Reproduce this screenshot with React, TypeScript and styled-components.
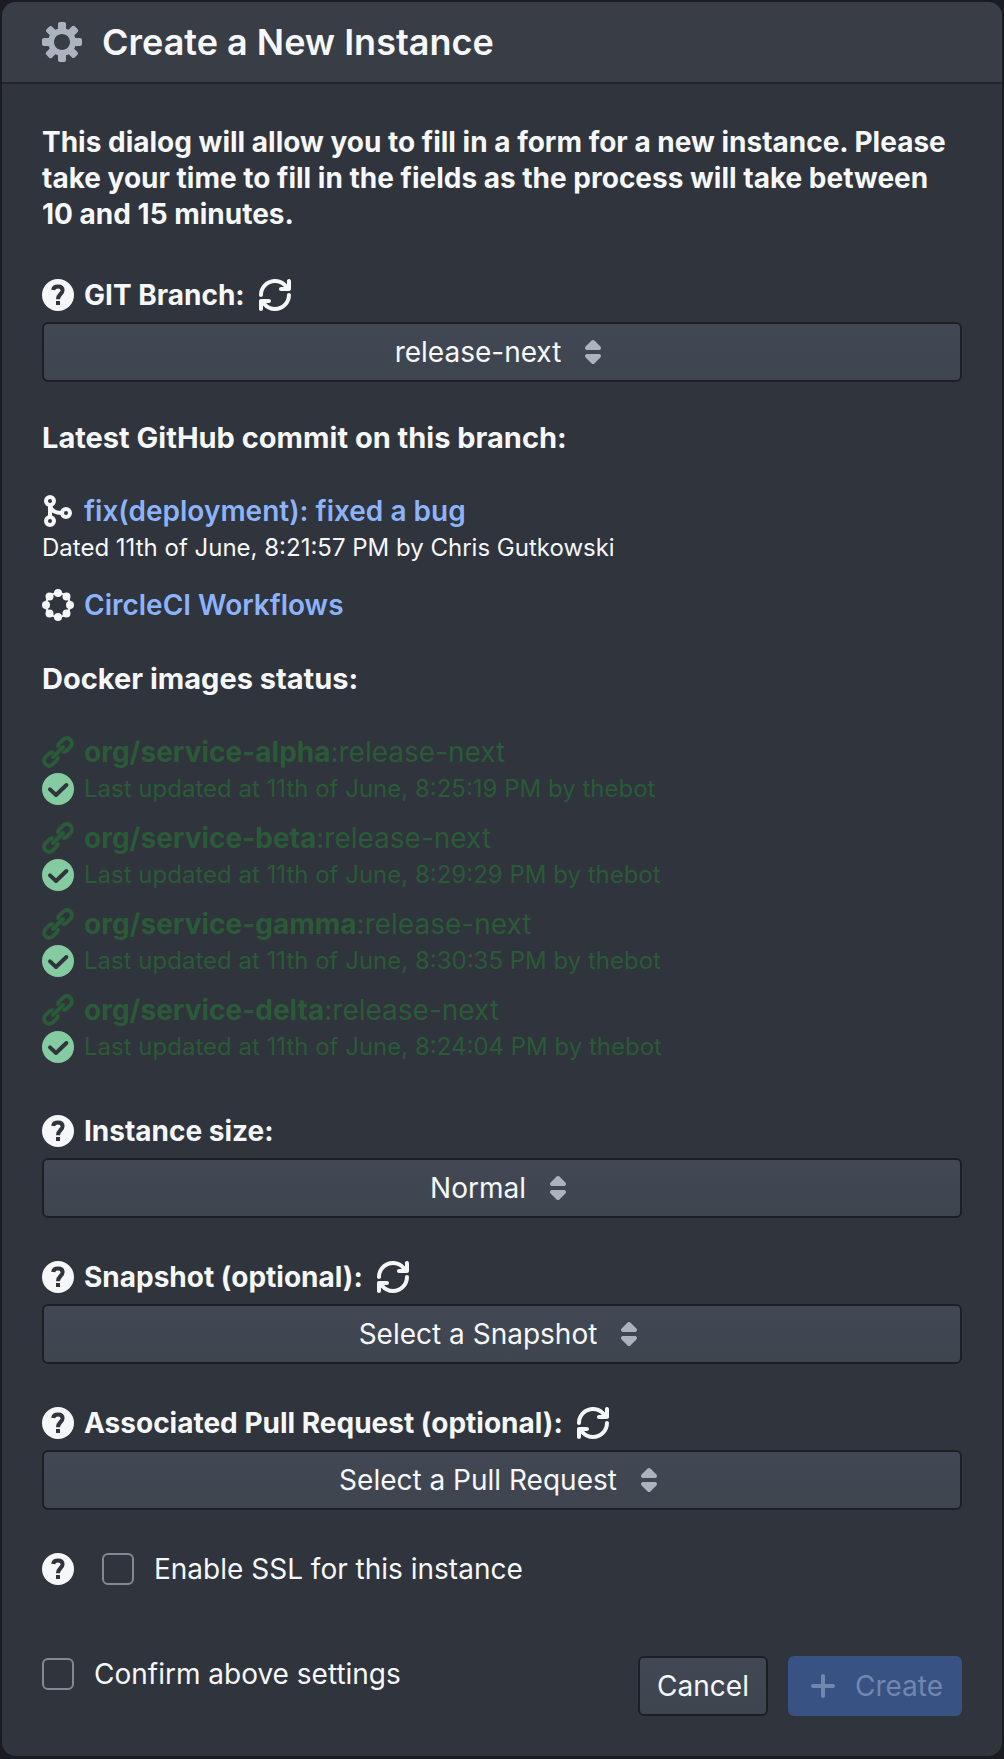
import React, { useId } from "react";
import styled, { createGlobalStyle, css } from "styled-components";

const color = {
  backdrop: "#1a1c22",
  dialog: "#30343c",
  header: "#393d46",
  line: "#22252b",
  text: "#f6f7f9",
  muted: "#abb3bf",
  link: "#8cb3fb",
  success: "#2a5a38",
  tick: "#85cba2",
  edge: "#1c1f24",
};

const GlobalStyle = createGlobalStyle`
  * { box-sizing: border-box; }
  body {
    margin: 0;
    background: ${color.backdrop};
    color: ${color.text};
    font-family: Inter, "Liberation Sans", sans-serif;
    font-size: 28px;
    line-height: 36px;
    -webkit-font-smoothing: antialiased;
  }
`;

const Backdrop = styled.div`
  min-height: 100vh;
  padding: 2px 2px 3px;
`;

const Dialog = styled.form`
  display: flex;
  flex-direction: column;
  background: ${color.dialog};
  border-radius: 14px;
  overflow: hidden;
`;

const Header = styled.header`
  display: flex;
  align-items: center;
  gap: 20px;
  min-height: 82px;
  padding: 0 40px;
  background: ${color.header};
  border-bottom: 2px solid ${color.line};
  color: ${color.muted};
`;

const Title = styled.h1`
  margin: 0;
  color: ${color.text};
  font-size: 36px;
  font-weight: 600;
  line-height: 40px;
`;

const Body = styled.div`
  display: flex;
  flex-direction: column;
  gap: 38px;
  padding: 40px;
`;

const Intro = styled.p`
  margin: 0;
  padding-bottom: 4px;
  font-weight: 700;
`;

const Field = styled.div`
  display: flex;
  flex-direction: column;
  gap: 9px;
  padding-top: 3px;
`;

const Row = styled.div<{ $strong?: boolean }>`
  display: flex;
  align-items: center;
  gap: 10px;
  min-height: 36px;
  ${(p) => p.$strong && css`font-weight: 700;`}
`;

const IconButton = styled.button`
  display: flex;
  margin: 0 0 0 4px;
  padding: 0;
  border: 0;
  background: none;
  color: inherit;
`;

const control = css`
  display: flex;
  align-items: center;
  justify-content: center;
  height: 60px;
  border: 2px solid ${color.edge};
  border-radius: 6px;
  background: linear-gradient(#424853, #3f454f);
  color: ${color.text};
`;

const SelectBox = styled.label`
  ${control}
  gap: 16px;
`;

const Select = styled.select`
  appearance: none;
  field-sizing: content;
  height: 56px;
  padding: 0;
  border: 0;
  outline: 0;
  background: transparent;
  color: inherit;
  font: inherit;
`;

const Section = styled.section`
  display: flex;
  flex-direction: column;
  gap: 37px;
`;

const Heading = styled.h2`
  margin: 0;
  font-size: 29px;
  font-weight: 700;
  line-height: 36px;
`;

const Entries = styled.div`
  display: flex;
  flex-direction: column;
  gap: 20px;
`;

const ImageList = styled.div`
  display: flex;
  flex-direction: column;
  gap: 12px;
  padding-bottom: 6px;
`;

const Link = styled.a`
  color: ${color.link};
  font-weight: 600;
  text-decoration: none;
`;

const Small = styled.div`
  font-size: 24px;
  line-height: 38px;
`;

const Image = styled.div`
  color: ${color.success};
`;

const ImageLink = styled.a`
  color: inherit;
  text-decoration: none;
`;

const CheckLabel = styled.label`
  display: flex;
  align-items: center;
  gap: 20px;
`;

const Checkbox = styled.input`
  appearance: none;
  width: 32px;
  height: 32px;
  margin: 0;
  border: 2px solid #838994;
  border-radius: 6px;
`;

const SslRow = styled.div`
  display: flex;
  align-items: center;
  gap: 28px;
  padding-top: 3px;
`;

const Footer = styled.footer`
  display: flex;
  align-items: flex-start;
  justify-content: space-between;
  padding: 29px 40px 40px;
`;

const Actions = styled.div`
  display: flex;
  gap: 20px;
`;

const Button = styled.button<{ $primary?: boolean }>`
  ${control}
  gap: 16px;
  padding: 0 17px;
  font: inherit;
  ${(p) =>
    p.$primary &&
    css`
      border-color: #385283;
      background: #385283;
      color: #7187ad;
    `}
`;

type IconProps = { size?: number; children: React.ReactNode };

const Svg = styled.svg`
  flex: none;
  display: block;
`;

const Icon = ({ size = 16, children }: IconProps) => (
  <Svg width={size * 2} height={size * 2} viewBox={`0 0 ${size} ${size}`} fill="currentColor" aria-hidden="true">
    {children}
  </Svg>
);

const CogIcon = () => (
  <Icon size={20}>
    <path d="M19 8h-2.31c-.14-.46-.33-.89-.56-1.3l1.7-1.7a.996.996 0 000-1.41l-1.41-1.41a.996.996 0 00-1.41 0l-1.7 1.7c-.41-.22-.84-.41-1.3-.55V1c0-.55-.45-1-1-1H9c-.55 0-1 .45-1 1v2.33c-.48.14-.94.35-1.37.59L5 2.28a.972.972 0 00-1.36 0L2.28 3.64c-.37.38-.37.99 0 1.36l1.64 1.63c-.24.43-.45.89-.59 1.37H1c-.55 0-1 .45-1 1v2c0 .55.45 1 1 1h2.31c.14.46.33.89.56 1.3L2.17 15a.996.996 0 000 1.41l1.41 1.41c.39.39 1.02.39 1.41 0l1.7-1.7c.41.22.84.41 1.3.55V19c0 .55.45 1 1 1h2c.55 0 1-.45 1-1v-2.33c.48-.14.94-.35 1.37-.59L15 17.72c.37.37.98.37 1.36 0l1.36-1.36c.37-.37.37-.98 0-1.36l-1.64-1.64c.24-.43.45-.89.59-1.36H19c.55 0 1-.45 1-1V9c0-.55-.45-1-1-1zm-9 6c-2.21 0-4-1.79-4-4s1.79-4 4-4 4 1.79 4 4-1.79 4-4 4z" />
  </Icon>
);

const HelpIcon = () => (
  <Icon>
    <circle cx="8" cy="8" r="8" />
    <path d="M5.6 5.5C5.7 4.4 6.7 3.8 8 3.8c1.4 0 2.3.7 2.3 1.8C10.3 7.5 8 7.6 8 10.1" fill="none" stroke={color.dialog} strokeWidth="2" />
    <path d="M7 11h2v2H7z" fill={color.dialog} />
  </Icon>
);

const RefreshIcon = () => (
  <Icon>
    <path d="M14.99 6.99c-.55 0-1 .45-1 1 0 3.31-2.69 6-6 6-1.77 0-3.36-.78-4.46-2h1.46c.55 0 1-.45 1-1s-.45-1-1-1h-4c-.55 0-1 .45-1 1v4c0 .55.45 1 1 1s1-.45 1-1v-1.74a7.95 7.95 0 006 2.74c4.42 0 8-3.58 8-8 0-.55-.45-1-1-1zm0-7c-.55 0-1 .45-1 1v1.74a7.95 7.95 0 00-6-2.74c-4.42 0-8 3.58-8 8 0 .55.45 1 1 1s1-.45 1-1c0-3.31 2.69-6 6-6 1.77 0 3.36.78 4.46 2h-1.46c-.55 0-1 .45-1 1s.45 1 1 1h4c.55 0 1-.45 1-1v-4c0-.55-.45-1-1-1z" />
  </Icon>
);

const CaretIcon = () => (
  <Icon>
    <path d="M5 7h6a1.003 1.003 0 00.71-1.71l-3-3C8.53 2.11 8.28 2 8 2s-.53.11-.71.29l-3 3A1.003 1.003 0 005 7zm6 2H5a1.003 1.003 0 00-.71 1.71l3 3c.18.18.43.29.71.29s.53-.11.71-.29l3-3A1.003 1.003 0 0011 9z" fill={color.muted} />
  </Icon>
);

const MergeIcon = () => (
  <Icon>
    <g fill="none" stroke="currentColor" strokeWidth="2">
      <circle cx="4" cy="3" r="2" />
      <circle cx="4" cy="13" r="2" />
      <circle cx="12" cy="9" r="2" />
      <path d="M4 5v6M4 5.500c.5 2.200 2.500 3.500 6 3.500" />
    </g>
  </Icon>
);

const WorkflowIcon = () => (
  <Icon>
    <circle cx="8" cy="8" r="6" fill="none" stroke="currentColor" />
    {Array.from({ length: 8 }, (_, i) => (
      <circle key={i} cx={8 + 6 * Math.cos((i * Math.PI) / 4)} cy={8 + 6 * Math.sin((i * Math.PI) / 4)} r="2" />
    ))}
  </Icon>
);

const CHAIN_LOOP = "M8.300 5.800C7.900 4.900 8.200 4.200 8.700 3.700L10.700 1.700A2.550 2.550 0 0 1 14.300 5.300L12.300 7.300C11.700 7.900 11 8.100 10.200 7.700";

const ChainIcon = () => (
  <Icon>
    <g fill="none" stroke="currentColor" strokeWidth="2">
      <path d="M5.500 10.500l5-5" strokeLinecap="round" />
      <path d={CHAIN_LOOP} />
      <path d={CHAIN_LOOP} transform="rotate(180 8 8)" />
    </g>
  </Icon>
);

const TickIcon = () => (
  <Icon>
    <circle cx="8" cy="8" r="8" fill={color.tick} />
    <path d="M4 8.200l3 2.800 5.200-5" fill="none" stroke={color.dialog} strokeWidth="2" strokeLinecap="round" strokeLinejoin="round" />
  </Icon>
);

const PlusIcon = () => (
  <Icon>
    <path d="M8 3v10M3 8h10" stroke="currentColor" strokeWidth="2" strokeLinecap="round" />
  </Icon>
);

type SelectFieldProps = { label: string; value: string; refreshable?: boolean };

const SelectField = ({ label, value, refreshable }: SelectFieldProps) => {
  const id = useId();
  return (
    <Field>
      <Row $strong>
        <HelpIcon />
        <label htmlFor={id}>{label}</label>
        {refreshable && (
          <IconButton type="button">
            <RefreshIcon />
          </IconButton>
        )}
      </Row>
      <SelectBox htmlFor={id}>
        <Select id={id} defaultValue={value}>
          <option>{value}</option>
        </Select>
        <CaretIcon />
      </SelectBox>
    </Field>
  );
};

const images = [
  { name: "org/service-alpha", time: "8:25:19 PM" },
  { name: "org/service-beta", time: "8:29:29 PM" },
  { name: "org/service-gamma", time: "8:30:35 PM" },
  { name: "org/service-delta", time: "8:24:04 PM" },
];

export default function App() {
  return (
    <>
      <GlobalStyle />
      <Backdrop>
        <Dialog>
          <Header>
            <CogIcon />
            <Title>Create a New Instance</Title>
          </Header>
          <Body>
            <Intro>
              This dialog will allow you to fill in a form for a new instance. Please take your time to fill in the
              fields as the process will take between 10 and 15 minutes.
            </Intro>
            <SelectField label="GIT Branch:" value="release-next" refreshable />
            <Section>
              <Heading>Latest GitHub commit on this branch:</Heading>
              <Entries>
                <div>
                  <Row>
                    <MergeIcon />
                    <Link href="#commit">fix(deployment): fixed a bug</Link>
                  </Row>
                  <Small>Dated 11th of June, 8:21:57 PM by Chris Gutkowski</Small>
                </div>
                <Row>
                  <WorkflowIcon />
                  <Link href="#workflows">CircleCI Workflows</Link>
                </Row>
              </Entries>
            </Section>
            <Section>
              <Heading>Docker images status:</Heading>
              <ImageList>
                {images.map((image) => (
                  <Image key={image.name}>
                    <Row>
                      <ChainIcon />
                      <ImageLink href="#image">
                        <b>{image.name}</b>:release-next
                      </ImageLink>
                    </Row>
                    <Row>
                      <TickIcon />
                      <Small>Last updated at 11th of June, {image.time} by thebot</Small>
                    </Row>
                  </Image>
                ))}
              </ImageList>
            </Section>
            <SelectField label="Instance size:" value="Normal" />
            <SelectField label="Snapshot (optional):" value="Select a Snapshot" refreshable />
            <SelectField label="Associated Pull Request (optional):" value="Select a Pull Request" refreshable />
            <SslRow>
              <HelpIcon />
              <CheckLabel>
                <Checkbox type="checkbox" />
                Enable SSL for this instance
              </CheckLabel>
            </SslRow>
          </Body>
          <Footer>
            <CheckLabel>
              <Checkbox type="checkbox" />
              Confirm above settings
            </CheckLabel>
            <Actions>
              <Button type="button">Cancel</Button>
              <Button type="submit" $primary disabled>
                <PlusIcon />
                Create
              </Button>
            </Actions>
          </Footer>
        </Dialog>
      </Backdrop>
    </>
  );
}
